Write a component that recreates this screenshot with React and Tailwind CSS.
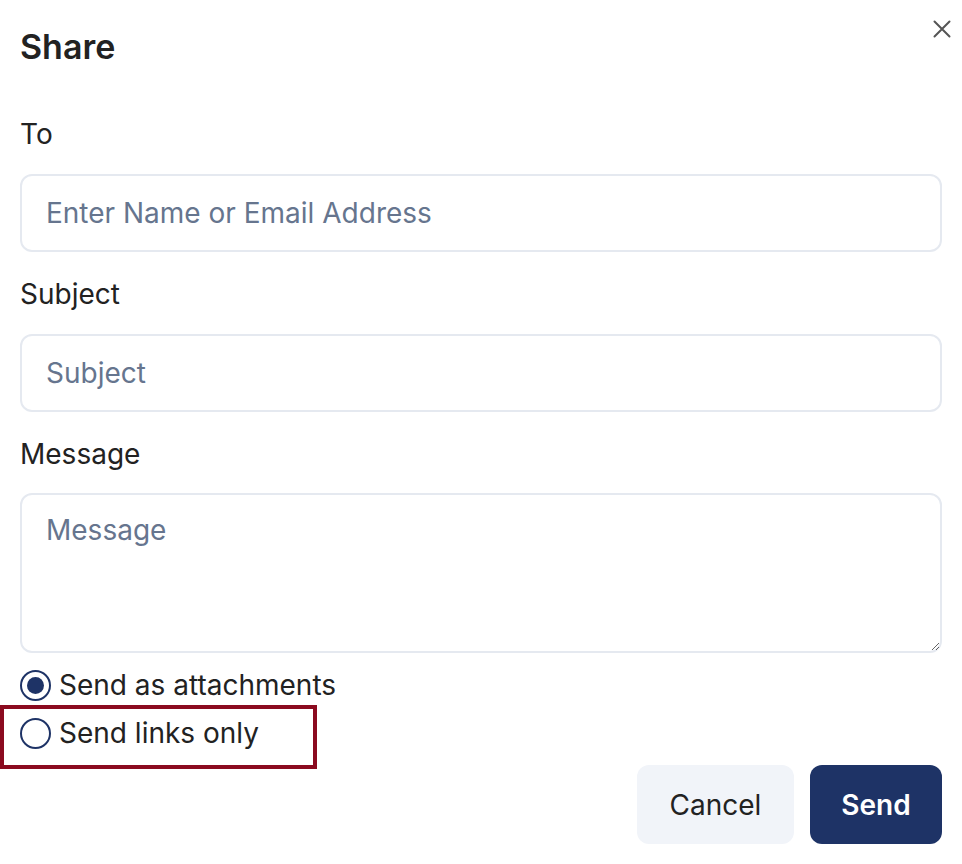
import { useState } from 'react';

const Radio = ({ checked, label, onClick }) => (
  <button type="button" onClick={onClick} className="flex items-center gap-2 h-12 text-left">
    <span className="w-[31px] h-[31px] rounded-full border-2 border-[#1e3366] flex items-center justify-center shrink-0">
      {checked && <span className="w-[17px] h-[17px] rounded-full bg-[#1e3366]" />}
    </span>
    <span className="text-[28px] text-[#222]">{label}</span>
  </button>
);

const App = () => {
  const [mode, setMode] = useState('attachments');

  return (
    <div className="w-[962px] h-[864px] bg-white px-5 pt-[24px] font-['Inter',sans-serif] text-[#222] relative">
      {/* Header */}
      <div className="flex items-start justify-between">
        <h1 className="text-[34px] leading-[45px] font-semibold">Share</h1>
        <button type="button" className="-mr-[18px] -mt-[13px] w-9 h-9 flex items-center justify-center text-[#555]">
          <svg width="20" height="20" viewBox="0 0 20 20" fill="none" stroke="currentColor" strokeWidth="2" strokeLinecap="round">
            <path d="M2.5 2.5 L17.5 17.5 M17.5 2.5 L2.5 17.5" />
          </svg>
        </button>
      </div>

      {/* Form */}
      <div className="mt-[49px]">
        <label className="block text-[28px] leading-[32px]">To</label>
        <input
          placeholder="Enter Name or Email Address"
          className="mt-6 w-full h-[78px] px-[24px] rounded-xl border-2 border-[#e5e9f0] text-[28px] placeholder:text-[#66758e] outline-none"
        />

        <label className="block mt-[26px] text-[28px] leading-[32px]">Subject</label>
        <input
          placeholder="Subject"
          className="mt-6 w-full h-[78px] px-[24px] rounded-xl border-2 border-[#e5e9f0] text-[28px] placeholder:text-[#66758e] outline-none"
        />

        <label className="block mt-[26px] text-[28px] leading-[32px]">Message</label>
        <textarea
          placeholder="Message"
          className="mt-[23px] block w-full h-[160px] px-[24px] py-[17px] rounded-xl border-2 border-[#e5e9f0] text-[28px] leading-[36px] placeholder:text-[#66758e] outline-none"
        />

        <div className="mt-2 flex flex-col">
          <Radio checked={mode === 'attachments'} label="Send as attachments" onClick={() => setMode('attachments')} />
          <div className="relative">
            <Radio checked={mode === 'links'} label="Send links only" onClick={() => setMode('links')} />
            <div className="absolute -left-5 -top-1 -bottom-3 w-[317px] border-4 border-[#8b0a1f] pointer-events-none" />
          </div>
        </div>

        <div className="mt-2 flex justify-end gap-4">
          <button type="button" className="h-[79px] w-[157px] rounded-xl bg-[#f1f4f9] text-[28px] text-[#222]">
            Cancel
          </button>
          <button type="button" className="h-[79px] w-[132px] rounded-xl bg-[#1e3366] text-[28px] font-semibold text-white">
            Send
          </button>
        </div>
      </div>
    </div>
  );
};

export default App;
